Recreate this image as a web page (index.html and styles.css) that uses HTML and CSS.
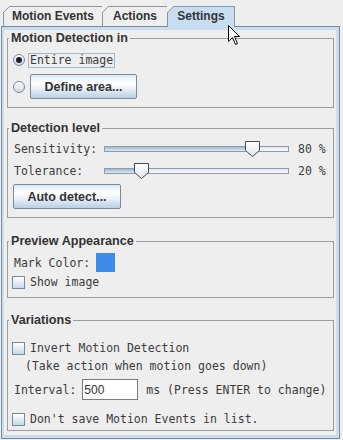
FILE: index.html
```html
<!DOCTYPE html>
<html lang="en">
<head>
    <meta charset="UTF-8">
    <title>Motion Settings</title>
    <link rel="stylesheet" href="styles.css">
</head>
<body>
    <div class="window">
        <div class="tabs">
            <div class="tab tab-events">Motion Events</div>
            <div class="tab tab-actions">Actions</div>
            <div class="tab tab-settings selected">Settings</div>
        </div>

        <div class="pane">
            <div class="pane-inner">

                <fieldset class="group g-area">
                    <legend>Motion Detection in</legend>
                    <div class="row r-entire">
                        <span class="radio checked"></span>
                        <span class="mono focus">Entire image</span>
                    </div>
                    <div class="row r-define">
                        <span class="radio"></span>
                        <button class="btn btn-define">Define area...</button>
                    </div>
                </fieldset>

                <fieldset class="group g-level">
                    <legend>Detection level</legend>
                    <div class="row r-sens">
                        <span class="mono slider-label">Sensitivity:</span>
                        <div class="slider">
                            <div class="track"><div class="fill" style="width: 80%"></div></div>
                            <svg class="thumb" style="left: 80%" width="17" height="16" viewBox="0 0 17 16">
                                <defs>
                                    <linearGradient id="tg1" x1="0" y1="0" x2="0" y2="1">
                                        <stop offset="0" stop-color="#ffffff"/>
                                        <stop offset="1" stop-color="#dbe6f1"/>
                                    </linearGradient>
                                </defs>
                                <path d="M1.5 0.5 H15.5 V9.5 L8.5 15.5 L1.5 9.5 Z" fill="url(#tg1)" stroke="#4a4a4a"/>
                            </svg>
                        </div>
                        <span class="mono pct">80 %</span>
                    </div>
                    <div class="row r-tol">
                        <span class="mono slider-label">Tolerance:</span>
                        <div class="slider">
                            <div class="track"><div class="fill" style="width: 20%"></div></div>
                            <svg class="thumb" style="left: 20%" width="17" height="16" viewBox="0 0 17 16">
                                <path d="M1.5 0.5 H15.5 V9.5 L8.5 15.5 L1.5 9.5 Z" fill="url(#tg1)" stroke="#4a4a4a"/>
                            </svg>
                        </div>
                        <span class="mono pct">20 %</span>
                    </div>
                    <div class="row r-auto">
                        <button class="btn btn-auto">Auto detect...</button>
                    </div>
                </fieldset>

                <fieldset class="group g-preview">
                    <legend>Preview Appearance</legend>
                    <div class="row r-mark">
                        <span class="mono">Mark Color:</span>
                        <span class="swatch"></span>
                    </div>
                    <div class="row r-show">
                        <span class="check"></span>
                        <span class="mono">Show image</span>
                    </div>
                </fieldset>

                <fieldset class="group g-var">
                    <legend>Variations</legend>
                    <div class="row r-invert">
                        <span class="check"></span>
                        <span class="mono">Invert Motion Detection</span>
                    </div>
                    <div class="row r-take">
                        <span class="mono">(Take action when motion goes down)</span>
                    </div>
                    <div class="row r-interval">
                        <span class="mono">Interval:</span>
                        <input class="field" type="text" value="500">
                        <span class="mono">ms (Press ENTER to change)</span>
                    </div>
                    <div class="row r-dont">
                        <span class="check"></span>
                        <span class="mono">Don't save Motion Events in list.</span>
                    </div>
                </fieldset>

            </div>
        </div>

        <svg class="cursor" width="13" height="21" viewBox="0 0 13 21">
            <path d="M0.5 0.5 V16.5 L4.5 12.5 L7.5 19.5 L9.5 18.5 L6.5 11.5 H11.5 Z" fill="#fff" stroke="#000"/>
        </svg>
    </div>
</body>
</html>
```

FILE: styles.css
```css
body {
    margin: 0;
    background: #eeeeee;
    font-family: "Liberation Sans", Arial, sans-serif;
    color: #333333;
}

.window {
    position: relative;
    width: 343px;
    height: 440px;
    background: #eeeeee;
    display: flex;
    flex-direction: column;
    overflow: hidden;
}

/* tabs */
.tabs {
    display: flex;
    height: 20px;
    margin-top: 6px;
    padding-left: 3px;
}

.tab {
    position: relative;
    box-sizing: border-box;
    height: 20px;
    border-top: 1px solid #8a96a2;
    border-left: 1px solid #8a96a2;
    background: #eeeeee;
    font-size: 12px;
    font-weight: bold;
    line-height: 19px;
    text-align: center;
    color: #333333;
}

.tab::before {
    content: "";
    position: absolute;
    left: -1px;
    top: -1px;
    width: 7px;
    height: 7px;
    background: linear-gradient(to bottom right, #eeeeee 0, #eeeeee calc(50% - 0.6px), #8a96a2 calc(50% - 0.6px), #8a96a2 calc(50% + 0.6px), transparent calc(50% + 0.6px));
}

.tab-events {
    width: 99px;
}

.tab-actions {
    width: 65px;
}

.tab-settings {
    width: 68px;
    border-right: 1px solid #8a96a2;
}

.tab.selected {
    height: 21px;
    background: #c8ddf2;
    z-index: 1;
}

/* content pane */
.pane {
    flex: 1;
    margin: 0 3px 1px 1px;
    border: 1px solid #7a8a99;
    padding: 3px 3px 3px 2px;
    background: #c8ddf2;
    display: flex;
}

.pane-inner {
    flex: 1;
    background: #eeeeee;
}

/* titled groups */
.group {
    margin: 0 0 0 3px;
    width: 327px;
    box-sizing: border-box;
    border: 1px solid #9c9c9c;
    padding: 0 0 8px 0;
    min-inline-size: 0;
}

.group legend {
    margin-left: 1px;
    padding: 0 2px;
    font-size: 12.6px;
    font-weight: bold;
    line-height: 16px;
    color: #333333;
}

.g-level {
    margin-top: 12px;
}

.g-preview {
    margin-top: 15px;
}

.g-var {
    margin-top: 14px;
    padding-bottom: 4px;
}

.row {
    display: flex;
    align-items: center;
}

.mono {
    font-family: "DejaVu Sans Mono", "Liberation Mono", monospace;
    font-size: 11.5px;
    color: #3c3c3c;
    white-space: pre;
}

/* group 1 */
.r-entire {
    margin-top: 6px;
    height: 16px;
    padding-left: 5px;
}

.r-define {
    margin-top: 6px;
    height: 25px;
    padding-left: 5px;
}

.radio {
    width: 12px;
    height: 12px;
    box-sizing: border-box;
    border: 1px solid #7a8a99;
    border-radius: 50%;
    background: linear-gradient(#ffffff, #c8d9ea);
    position: relative;
    flex: none;
}

.radio.checked::after {
    content: "";
    position: absolute;
    left: 2px;
    top: 2px;
    width: 6px;
    height: 6px;
    border-radius: 50%;
    background: #222222;
}

.focus {
    margin-left: 3px;
    border: 1px solid #a3b8cc;
    padding: 0 1px;
    line-height: 13px;
}

.btn {
    box-sizing: border-box;
    height: 25px;
    padding: 0;
    border: 1px solid #7a8a99;
    border-radius: 2px;
    background: linear-gradient(#dde8f3 0, #ffffff 35%, #eef3f9 55%, #b8cfe5 100%);
    font-family: "Liberation Sans", Arial, sans-serif;
    font-size: 12.5px;
    font-weight: bold;
    color: #333333;
}

.btn-define {
    width: 107px;
    margin-left: 5px;
}

/* group 2 */
.r-sens {
    margin-top: 5px;
    height: 16px;
    padding-left: 6px;
}

.r-tol {
    margin-top: 6px;
    height: 16px;
    padding-left: 6px;
}

.slider-label {
    width: 90px;
}

.slider {
    position: relative;
    width: 185px;
    height: 16px;
    display: flex;
    align-items: center;
}

.track {
    width: 100%;
    height: 6px;
    box-sizing: border-box;
    border: 1px solid #8d9cab;
    background: linear-gradient(#e4e9ee, #fafafa);
}

.fill {
    height: 100%;
    background: linear-gradient(#9fb6cc, #dfe9f3);
}

.thumb {
    position: absolute;
    top: 0;
    margin-left: -8px;
}

.pct {
    margin-left: 9px;
}

.r-auto {
    margin-top: 5px;
    padding-left: 5px;
}

.btn-auto {
    width: 108px;
}

/* group 3 */
.r-mark {
    margin-top: 4px;
    height: 19px;
    padding-left: 6px;
}

.swatch {
    width: 19px;
    height: 19px;
    margin-left: 6px;
    background: #3f8be9;
}

.r-show {
    margin-top: 3px;
    height: 14px;
    padding-left: 4px;
}

.check {
    width: 13px;
    height: 13px;
    box-sizing: border-box;
    border: 1px solid #7a8a99;
    background: linear-gradient(#ffffff, #c8d9ea);
    margin-right: 5px;
    flex: none;
}

/* group 4 */
.r-invert {
    margin-top: 13px;
    height: 14px;
    padding-left: 4px;
}

.r-take {
    margin-top: 4px;
    height: 14px;
    padding-left: 17px;
}

.r-interval {
    margin-top: 6px;
    height: 21px;
    padding-left: 6px;
}

.field {
    box-sizing: border-box;
    width: 56px;
    height: 21px;
    margin: 0 8px 0 6px;
    padding: 0 1px;
    border: 1px solid #7a7a7a;
    background: #ffffff;
    font-family: "Liberation Sans", Arial, sans-serif;
    font-size: 12px;
    color: #333333;
}

.r-dont {
    margin-top: 12px;
    height: 14px;
    padding-left: 4px;
}

/* mouse pointer over the tab */
.cursor {
    position: absolute;
    left: 228px;
    top: 25px;
    z-index: 2;
}
```
